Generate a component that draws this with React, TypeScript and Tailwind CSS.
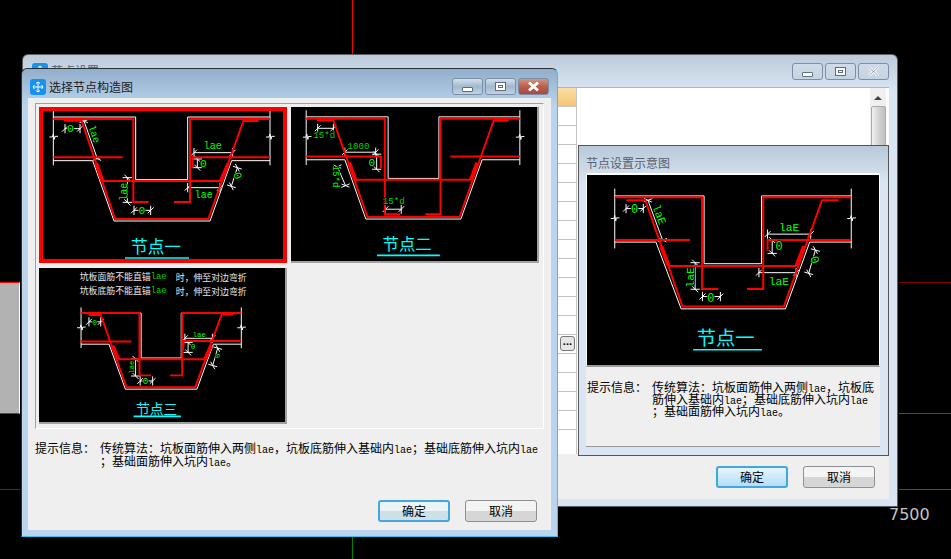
const CJK = '"Noto Sans CJK SC", "Liberation Sans", sans-serif';
const MONO = '"Liberation Mono", "Noto Sans CJK SC", monospace';

type Pt = [number, number];
type Label = { t: string; x: number; y: number; r?: number; s?: number; c?: string };

type DiagramData = {
  box: [number, number, number, number];
  white: Pt[][];
  red: Pt[][];
  thick: Pt[][];
  dims: Pt[][];
  labels: Label[];
  title: { t: string; x: number; y: number; s: number };
  underline: [number, number, number];
};

const pts = (p: Pt[]) => p.map((q) => q.join(',')).join(' ');

// short slash + cross tick at each end of a dimension line
function Dim({ line }: { line: Pt[] }) {
  const [a, b] = line;
  const dx = b[0] - a[0];
  const dy = b[1] - a[1];
  const len = Math.hypot(dx, dy);
  const ux = dx / len;
  const uy = dy / len;
  const tick = (p: Pt, i: number) => (
    <g key={i}>
      <line x1={p[0] - uy * 14} y1={p[1] + ux * 14} x2={p[0] + uy * 14} y2={p[1] - ux * 14} />
      <line x1={p[0] - ux * 9 - uy * 9} y1={p[1] - uy * 9 + ux * 9} x2={p[0] + ux * 9 + uy * 9} y2={p[1] + uy * 9 - ux * 9} />
    </g>
  );
  return (
    <g>
      <line x1={a[0]} y1={a[1]} x2={b[0]} y2={b[1]} />
      {tick(a, 0)}
      {tick(b, 1)}
    </g>
  );
}

function Diagram({ d, children }: { d: DiagramData; children?: React.ReactNode }) {
  return (
    <svg viewBox={d.box.join(' ')} className="block h-full w-full bg-black">
      <g fill="none" stroke="#fff" strokeWidth={3}>
        {d.white.map((p, i) => (
          <polyline key={i} points={pts(p)} />
        ))}
        {d.dims.map((l, i) => (
          <Dim key={i} line={l} />
        ))}
      </g>
      <g fill="none" stroke="#ff0000" strokeWidth={6}>
        {d.red.map((p, i) => (
          <polyline key={i} points={pts(p)} />
        ))}
        {d.thick.map((p, i) => (
          <polyline key={i} points={pts(p)} strokeWidth={12} />
        ))}
      </g>
      {d.labels.map((l, i) => (
        <text
          key={i}
          x={l.x}
          y={l.y}
          fill={l.c ?? '#00ff00'}
          stroke="#000"
          strokeWidth={5}
          paintOrder="stroke"
          fontSize={l.s ?? 30}
          fontFamily={MONO}
          textAnchor="middle"
          dominantBaseline="central"
          transform={l.r ? `rotate(${l.r} ${l.x} ${l.y})` : undefined}
        >
          {l.t}
        </text>
      ))}
      {children}
      <text
        x={d.title.x}
        y={d.title.y}
        fill="#00ffff"
        fontSize={d.title.s}
        fontFamily={CJK}
        textAnchor="middle"
        dominantBaseline="central"
      >
        {d.title.t}
      </text>
      <line x1={d.underline[0]} y1={d.underline[2]} x2={d.underline[1]} y2={d.underline[2]} stroke="#00ffff" strokeWidth={5} />
    </svg>
  );
}

const breakMark = (x: number, y: number): Pt[] => [
  [x - 12, y + 2],
  [x - 3, y + 2],
  [x, y - 7],
  [x + 3, y + 9],
  [x + 5, y],
  [x + 14, y],
];

const node1: DiagramData = {
  box: [69, 152, 720, 444],
  white: [
    [[100, 170], [347, 170], [347, 358], [503, 358], [503, 170], [750, 170]],
    [[100, 150], [100, 315]],
    [[750, 150], [750, 315]],
    [[100, 301], [218, 301], [282, 482], [570, 482], [635, 301], [750, 301]],
    breakMark(100, 228),
    breakMark(750, 228),
  ],
  red: [
    [[100, 176], [340, 176], [340, 425], [386, 425]],
    [[750, 176], [510, 176], [510, 425], [462, 425]],
    [[132, 181], [185, 181], [285, 476], [565, 476], [670, 182], [716, 182]],
    [[100, 291], [308, 291]],
    [[518, 322], [518, 291], [750, 291]],
    [[245, 362], [605, 362]],
  ],
  thick: [
    [[229, 310], [247, 362]],
    [[625, 310], [603, 362]],
  ],
  dims: [
    [[135, 205], [180, 205]],
    [[192, 182], [232, 295]],
    [[522, 277], [638, 277]],
    [[532, 296], [532, 322]],
    [[503, 382], [600, 382]],
    [[322, 352], [322, 426]],
    [[342, 450], [392, 450]],
    [[652, 322], [634, 378]],
  ],
  labels: [
    { t: 'lae', x: 221, y: 222, r: 70 },
    { t: '0', x: 151, y: 207, s: 34 },
    { t: 'lae', x: 578, y: 260 },
    { t: '0', x: 550, y: 310, s: 34 },
    { t: 'lae', x: 551, y: 405 },
    { t: 'lae', x: 313, y: 394, r: -90 },
    { t: '0', x: 366, y: 453, s: 34 },
    { t: '0', x: 651, y: 347, r: 70, s: 34 },
  ],
  title: { t: '节点一', x: 408, y: 556, s: 50 },
  underline: [315, 507, 593],
};

const node2: DiagramData = {
  box: [18, 140, 742, 470],
  white: [
    [[60, 170], [310, 170], [310, 358], [465, 358], [465, 170], [712, 170]],
    [[60, 150], [60, 317]],
    [[712, 150], [712, 317]],
    [[60, 301], [178, 301], [242, 482], [532, 482], [597, 301], [712, 301]],
    breakMark(62, 230),
    breakMark(712, 230),
  ],
  red: [
    [[60, 176], [300, 176], [300, 467], [347, 467]],
    [[712, 176], [470, 176], [470, 467], [423, 467]],
    [[93, 181], [143, 181], [247, 476], [528, 476], [632, 182], [678, 182]],
    [[60, 291], [288, 291], [288, 328]],
    [[500, 291], [712, 291]],
    [[210, 362], [565, 362]],
  ],
  thick: [
    [[191, 310], [210, 362]],
    [[582, 310], [563, 362]],
  ],
  dims: [
    [[95, 205], [143, 205]],
    [[178, 278], [272, 278]],
    [[275, 284], [275, 330]],
    [[155, 322], [180, 380]],
    [[302, 452], [350, 452]],
  ],
  labels: [
    { t: '15*d', x: 115, y: 228, c: '#00d000', s: 28 },
    { t: '1000', x: 220, y: 260, c: '#00d000', s: 28 },
    { t: '0', x: 260, y: 310, s: 34 },
    { t: '15*d', x: 148, y: 352, r: 90, s: 28 },
    { t: '15*d', x: 327, y: 428, c: '#00d000', s: 28 },
  ],
  title: { t: '节点二', x: 368, y: 556, s: 50 },
  underline: [276, 468, 593],
};

const node3: DiagramData = {
  box: [27, 18, 743, 469],
  white: [
    [[150, 155], [335, 155], [335, 292], [457, 292], [457, 155], [640, 155]],
    [[152, 138], [152, 262]],
    [[640, 138], [640, 262]],
    [[152, 250], [237, 250], [287, 387], [505, 387], [555, 250], [640, 250]],
    breakMark(152, 198),
    breakMark(640, 198),
  ],
  red: [
    [[150, 155], [330, 155], [330, 345], [365, 345]],
    [[640, 155], [460, 155], [460, 345], [423, 345]],
    [[175, 161], [212, 161], [290, 381], [500, 381], [580, 160], [615, 160]],
    [[150, 242], [305, 242]],
    [[462, 268], [465, 240], [640, 240]],
    [[265, 296], [530, 296]],
  ],
  thick: [
    [[248, 255], [265, 296]],
    [[548, 255], [530, 296]],
  ],
  dims: [
    [[176, 182], [212, 182]],
    [[468, 232], [552, 232]],
    [[478, 245], [478, 275]],
    [[318, 295], [318, 347]],
    [[332, 362], [370, 362]],
    [[568, 262], [553, 315]],
  ],
  labels: [
    { t: 'lae', x: 512, y: 223, s: 22 },
    { t: '0', x: 193, y: 184, s: 24 },
    { t: '0', x: 493, y: 258, s: 24 },
    { t: 'lae', x: 307, y: 320, r: -90, s: 22 },
    { t: '0', x: 348, y: 365, s: 28 },
    { t: '0', x: 566, y: 287, r: 70, s: 22 },
  ],
  title: { t: '节点三', x: 382, y: 445, s: 42 },
  underline: [312, 456, 470],
};

const nodePreview: DiagramData = {
  box: [38, 104, 872, 572],
  white: [
    [[118, 167], [387, 167], [387, 371], [560, 371], [560, 167], [830, 167]],
    [[118, 145], [118, 325]],
    [[830, 145], [830, 325]],
    [[118, 306], [242, 306], [318, 507], [632, 507], [705, 306], [830, 306]],
    breakMark(118, 233),
    breakMark(830, 233),
  ],
  red: [
    [[118, 171], [381, 171], [381, 447], [430, 447]],
    [[830, 171], [565, 171], [565, 447], [516, 447]],
    [[153, 180], [210, 180], [322, 500], [627, 500], [742, 180], [792, 180]],
    [[118, 300], [345, 300]],
    [[578, 332], [578, 300], [830, 300]],
    [[280, 378], [665, 378]],
  ],
  thick: [
    [[258, 318], [280, 378]],
    [[688, 318], [665, 378]],
  ],
  dims: [
    [[152, 205], [204, 205]],
    [[218, 180], [262, 300]],
    [[578, 282], [708, 282]],
    [[592, 300], [592, 340]],
    [[552, 398], [664, 398]],
    [[360, 368], [360, 448]],
    [[382, 470], [436, 470]],
    [[722, 330], [702, 400]],
  ],
  labels: [
    { t: '0', x: 178, y: 208, s: 36 },
    { t: 'laE', x: 250, y: 224, r: 70, s: 34 },
    { t: 'laE', x: 643, y: 265, s: 34 },
    { t: '0', x: 613, y: 320, s: 36 },
    { t: 'laE', x: 612, y: 425, s: 34 },
    { t: 'laE', x: 347, y: 412, r: -90, s: 34 },
    { t: '0', x: 407, y: 476, s: 36 },
    { t: '0', x: 718, y: 360, r: 70, s: 36 },
  ],
  title: { t: '节点一', x: 452, y: 592, s: 58 },
  underline: [354, 561, 630],
};

function CaptionButtons({ active }: { active?: boolean }) {
  const cap = 'flex h-[17px] items-center justify-center rounded-[3px] border border-[#7c8ea8] bg-gradient-to-b';
  const soft = active ? 'from-[#d3e0ee] via-[#a3b9d0] to-[#c0d2e4]' : 'from-[#cfdbe8] to-[#c4d3e3]';
  return (
    <div className="flex gap-[2px]">
      <div className={`${cap} ${soft} w-[31px]`}>
        <span className="mt-[5px] h-[5px] w-[11px] rounded-[1px] border border-[#5d6c80] bg-white" />
      </div>
      <div className={`${cap} ${soft} w-[31px]`}>
        <span className="flex h-[9px] w-[11px] items-center justify-center border border-[#5d6c80] bg-white">
          <span className="h-[3px] w-[5px] border border-[#5d6c80]" />
        </span>
      </div>
      <div
        className={`${cap} w-[31px] ${
          active ? 'border-[#5b2a33] from-[#cf9488] via-[#b9604f] to-[#a8483c]' : soft
        }`}
      >
        <svg width="13" height="11" viewBox="0 0 13 11">
          <path d="M2 1.5 11 9.5M11 1.5 2 9.5" stroke={active ? '#fff' : '#f2f5f8'} strokeWidth="3" />
          {!active && <path d="M2 1.5 11 9.5M11 1.5 2 9.5" stroke="#6b7a8d" strokeWidth="0.6" />}
        </svg>
      </div>
    </div>
  );
}

function DlgButton({ label, tone }: { label: string; tone?: 'focus' | 'hot' }) {
  const look =
    tone === 'hot'
      ? 'border-2 border-[#3fa8e0] bg-gradient-to-b from-[#e6f5fd] to-[#b3def8]'
      : tone === 'focus'
        ? 'border-2 border-[#3fa8e0] bg-[linear-gradient(#eaf4f8_50%,#cfdfe6_50%)]'
        : 'border border-[#8f8f8f] bg-[linear-gradient(#f4f4f4_50%,#d6d6d6_50%)]';
  return (
    <button
      className={`h-[22px] w-[72px] rounded-[3px] text-[12px] leading-none text-black ${look}`}
      style={{ fontFamily: CJK }}
    >
      {label}
    </button>
  );
}

function AppIcon() {
  return (
    <div className="flex h-4 w-4 shrink-0 items-center justify-center rounded-[3px] bg-[#1692f0]">
      <svg width="12" height="12" viewBox="0 0 12 12" fill="none" stroke="#fff" strokeWidth="1">
        <path d="M6 1v10M1 6h10M4 2.5 6 1l2 1.5M4 9.5 6 11l2-1.5M2.5 4 1 6l1.5 2M9.5 4 11 6 9.5 8" />
      </svg>
    </div>
  );
}

// the dialog font sets "lae" half width: 6px a letter next to 12px hanzi
function HintLine({ text, height }: { text: string; height: string }) {
  const parts = text.split('lae');
  return (
    <span className={`whitespace-pre ${height}`}>
      {parts.map((p, i) => (
        <span key={i}>
          {p}
          {i < parts.length - 1 && (
            <span className="text-[10px]" style={{ fontFamily: MONO }}>
              lae
            </span>
          )}
        </span>
      ))}
    </span>
  );
}

function HintText({ lines, leading, height }: { lines: string[]; leading: string; height: string }) {
  return (
    <div className={`flex text-[12px] text-black ${leading}`} style={{ fontFamily: CJK }}>
      <span className="w-[65px] shrink-0">{'提示信息\uFF1A'}</span>
      <div className="flex flex-col">
        {lines.map((l) => (
          <HintLine key={l} text={l} height={height} />
        ))}
      </div>
    </div>
  );
}

export default function App() {
  const rows = [0, 1, 2, 3, 4, 5, 6, 7, 8, 9, 10, 11, 12, 13, 14, 15, 16, 17];
  return (
    <div className="relative h-[559px] w-[951px] overflow-hidden bg-black">
      {/* CAD canvas behind the dialogs */}
      <div className="absolute left-[352px] top-0 h-[54px] w-px bg-[#ff0000]" />
      <div className="absolute left-[352px] top-[537px] h-[22px] w-px bg-[#008000]" />
      <div className="absolute left-0 top-[282px] h-[132px] w-[20px] border-y border-r border-[#ff0000] border-r-white bg-[#b2b2b2]" />
      <div className="absolute left-0 top-[489px] h-px w-[20px] bg-[#006000]" />
      <div className="absolute left-[899px] top-[282px] h-px w-[52px] bg-[#800000]" />
      <div className="absolute left-[899px] top-[413px] h-px w-[52px] bg-[#ff0000]" />
      <div className="absolute left-[899px] top-[489px] h-px w-[52px] bg-[#008000]" />
      <div className="absolute left-[889px] top-[505px] text-[16px] leading-5 text-[#c4c4c4]" style={{ fontFamily: '"DejaVu Sans", sans-serif' }}>
        7500
      </div>

      {/* back window */}
      <div className="absolute left-[22px] top-[54px] flex h-[453px] w-[876px] flex-col rounded-t-[6px] border border-[#5a5f66] bg-gradient-to-b from-[#bccbda] from-0% to-[#d9e5f2] to-[8%]">
        <div className="flex h-[32px] shrink-0 items-start justify-between pl-[9px] pr-[8px] pt-[8px]">
          <div className="flex items-center gap-[3px]">
            <AppIcon />
            <span className="text-[12px] leading-none text-[#55606c]" style={{ fontFamily: CJK }}>
              节点设置
            </span>
          </div>
          <CaptionButtons />
        </div>
        <div className="mx-[8px] mb-[7px] flex min-h-0 flex-1 flex-col overflow-hidden border-t border-[#aeb4ba] bg-[#efefef]">
          <div className="flex h-[366px] shrink-0 justify-end">
            <div className="flex w-[23px] flex-col border-r border-[#c4c4c4] bg-white">
              <div className="h-[18px] shrink-0 bg-gradient-to-b from-[#fadfa5] to-[#f3c56f]" />
              {rows.map((r) => (
                <div key={r} className="relative h-[19px] shrink-0 border-t border-[#c4c4c4]">
                  {r === 12 && (
                    <div className="absolute left-[6px] top-[1px] z-10 flex h-[15px] w-[15px] items-center justify-center rounded-[3px] border border-[#777] bg-[#e6e6e6] text-[11px] font-bold leading-[8px] text-black">
                      ···
                    </div>
                  )}
                </div>
              ))}
            </div>
            <div className="h-full w-[293px] bg-white" />
            <div className="flex h-full w-[16px] flex-col items-center bg-[#f0f0f0]">
              <span className="mt-[8px] h-0 w-0 border-x-[4px] border-b-[4px] border-x-transparent border-b-[#444]" />
              <span className="mt-[6px] h-[50px] w-[15px] rounded-[2px] border border-[#aaa] bg-gradient-to-r from-[#f0f0f0] via-[#d4d4d4] to-[#c0c0c0]" />
            </div>
            <div className="w-[3px] bg-white" />
          </div>
          <div className="flex flex-1 items-start justify-end gap-[15px] pr-[14px] pt-[12px]">
            <DlgButton label="确定" tone="hot" />
            <DlgButton label="取消" />
          </div>
        </div>
      </div>

      {/* preview panel */}
      <div className="absolute left-[578px] top-[145px] flex h-[311px] w-[311px] flex-col border border-[#555] bg-gradient-to-b from-[#b9c9d9] to-[#d9e5f2] to-[12%] pb-[8px] pl-[7px] pr-[8px]">
        <div className="flex h-[27px] shrink-0 items-center pt-[7px] text-[12px] leading-none text-[#55606c]" style={{ fontFamily: CJK }}>
          节点设置示意图
        </div>
        <div className="h-[194px] shrink-0 border-x border-t-2 border-white border-b-2 border-b-[#9a9a9a]">
          <Diagram d={nodePreview} />
        </div>
        <div className="flex-1 border-b border-[#999] bg-[#efefef] pl-px pt-[14px]">
          <HintText
            leading="leading-[12px]"
            height="h-[12px]"
            lines={[
              '传统算法\uFF1A坑板面筋伸入两侧lae\uFF0C坑板底',
              '筋伸入基础内lae\uFF1B基础底筋伸入坑内lae',
              '\uFF1B基础面筋伸入坑内lae\u3002',
            ]}
          />
        </div>
      </div>

      {/* front dialog */}
      <div className="absolute left-[21px] top-[68px] flex h-[469px] w-[537px] flex-col rounded-t-[6px] border border-[#2b3138] border-b-[#35c4ee] border-r-[#35c4ee] bg-gradient-to-b from-[#93aeca] to-[#b9d4ec] to-[8%]">
        <div className="flex h-[29px] shrink-0 items-center gap-[3px] pl-[8px] pr-[8px] pt-[6px]">
          <AppIcon />
          <span className="flex-1 text-[12px] leading-none text-[#1a1a1a]" style={{ fontFamily: CJK }}>
            选择节点构造图
          </span>
          <CaptionButtons active />
        </div>
        <div className="mx-[6px] mb-[6px] flex min-h-0 flex-1 flex-col bg-[#efefef] px-[7px] pt-[5px]">
          <div className="grid h-[326px] shrink-0 grid-cols-[248px_248px] grid-rows-[156px_156px] content-start gap-x-[4px] gap-y-[5px] border border-[#a0a0a0] border-b-white border-r-white bg-[#efefef] p-[3px]">
            <div className="border-[4px] border-[#ff0000]">
              <Diagram d={node1} />
            </div>
            <div className="border-r-2 border-b-2 border-[#a0a0a0]">
              <Diagram d={node2} />
            </div>
            <div className="border-r-2 border-b-2 border-[#a0a0a0]">
              <Diagram d={node3}>
                <text x={148} y={45} fill="#e8e8e8" fontSize={27} fontFamily={CJK} dominantBaseline="central">
                  坑板面筋不能直锚<tspan fill="#00d000" fontFamily={MONO}>lae</tspan>
                  <tspan dx={28}>{'时\uFF0C伸至对边弯折'}</tspan>
                </text>
                <text x={148} y={87} fill="#e8e8e8" fontSize={27} fontFamily={CJK} dominantBaseline="central">
                  坑板底筋不能直锚<tspan fill="#00d000" fontFamily={MONO}>lae</tspan>
                  <tspan dx={28}>{'时\uFF0C伸至对边弯折'}</tspan>
                </text>
              </Diagram>
            </div>
          </div>
          <div className="pt-[12px]">
            <HintText
              leading="leading-[13px]"
              height="h-[13px]"
              lines={[
                '传统算法\uFF1A坑板面筋伸入两侧lae\uFF0C坑板底筋伸入基础内lae\uFF1B基础底筋伸入坑内lae',
                '\uFF1B基础面筋伸入坑内lae\u3002',
              ]}
            />
          </div>
          <div className="mt-auto flex justify-end gap-[15px] pb-[8px] pr-[7px]">
            <DlgButton label="确定" tone="focus" />
            <DlgButton label="取消" />
          </div>
        </div>
      </div>
    </div>
  );
}
